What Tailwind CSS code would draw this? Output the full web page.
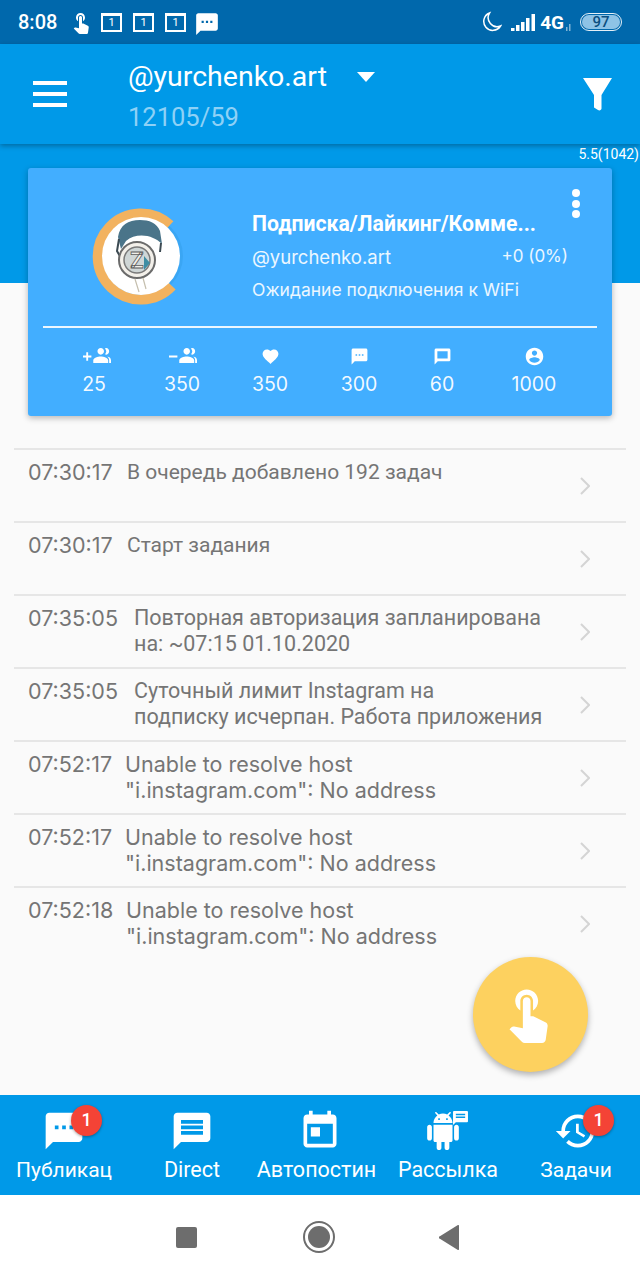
<!doctype html>
<html lang="ru">
  <head>
    <meta charset="UTF-8" />
    <title>Задания</title>
    <script src="https://cdn.jsdelivr.net/npm/@tailwindcss/browser@4"></script>
  </head>
  <body class="bg-white font-['Roboto',sans-serif]">
    <div class="w-[640px] h-[1280px] flex flex-col overflow-hidden">
      <!-- status bar -->
      <div class="h-[44px] shrink-0 bg-[#0068ac] flex items-center pl-[18px] text-white">
        <span class="text-[20px] font-medium w-[51px]">8:08</span>
        <svg class="w-[24px] h-[24px]" viewBox="0 0 24 24" fill="#fff"><path d="M9 11.24V7.5C9 6.12 10.12 5 11.5 5S14 6.12 14 7.5v3.74c1.21-.81 2-2.18 2-3.74C16 5.01 13.99 3 11.5 3S7 5.01 7 7.5c0 1.56.79 2.93 2 3.74zm9.84 4.63l-4.54-2.26c-.17-.07-.35-.11-.54-.11H13v-6c0-.83-.67-1.5-1.5-1.5S10 6.67 10 7.5v10.74l-3.43-.72c-.08-.01-.15-.03-.24-.03-.31 0-.59.13-.79.33l-.79.8 4.94 4.94c.27.27.65.44 1.06.44h6.79c.75 0 1.33-.55 1.44-1.28l.75-5.27c.01-.07.02-.14.02-.2 0-.62-.38-1.16-.91-1.38z"/></svg>
        <div class="flex gap-[11px] ml-[8px]">
          <span class="w-[21px] h-[19px] border-2 border-white border-t-[3px] flex items-center justify-center text-[11px] leading-none">1</span>
          <span class="w-[21px] h-[19px] border-2 border-white border-t-[3px] flex items-center justify-center text-[11px] leading-none">1</span>
          <span class="w-[21px] h-[19px] border-2 border-white border-t-[3px] flex items-center justify-center text-[11px] leading-none">1</span>
        </div>
        <svg class="w-[26px] h-[24px] ml-[8px] mt-[2px]" viewBox="0 0 24 22" preserveAspectRatio="none" fill="#fff"><path d="M20 2H4c-1.1 0-1.99.9-1.99 2L2 22l4-4h14c1.1 0 2-.9 2-2V4c0-1.1-.9-2-2-2zM9 11H7V9h2v2zm4 0h-2V9h2v2zm4 0h-2V9h2v2z"/></svg>
        <div class="ml-auto pr-[18px] flex items-center">
          <svg class="w-[21px] h-[22px]" viewBox="0 0 20 22" fill="none" stroke="#fff" stroke-width="1.5"><path d="M8 2a9 9 0 1 0 11 13 9 9 0 0 1-11-13z"/></svg>
          <svg class="w-[24px] h-[17px] ml-[9px]" viewBox="0 0 24 17" fill="#fff"><rect x="0" y="14" width="3.500" height="3"/><rect x="5" y="11" width="3.500" height="6"/><rect x="10" y="8" width="3.500" height="9"/><rect x="15" y="4" width="3.500" height="13"/><rect x="20.500" y="0" width="3.500" height="17"/></svg>
          <span class="ml-[5px] text-[19px] font-bold leading-none">4G</span>
          <svg class="w-[5px] h-[7px] ml-[2px] mt-[10px] opacity-50" viewBox="0 0 5 7" fill="#fff"><rect x="0" y="3" width="1.5" height="4"/><rect x="3" y="0" width="1.5" height="7"/></svg>
          <div class="ml-[9px] w-[42px] h-[18px] rounded-full border border-white/90 p-[1px] flex">
            <div class="flex-1 rounded-full bg-[#8ec3e6] text-[15px] leading-[14px] font-medium text-center text-[#0b4f80]">97</div>
          </div>
        </div>
      </div>

      <!-- app bar -->
      <div class="h-[100px] shrink-0 bg-[#0099e8] flex items-center pl-[33px] pr-[28px] text-white shadow-[0_2px_5px_rgba(0,0,0,0.3)] relative z-20">
        <div class="w-[34px] flex flex-col gap-[7px]">
          <div class="h-[4px] bg-white"></div>
          <div class="h-[4px] bg-white"></div>
          <div class="h-[4px] bg-white"></div>
        </div>
        <div class="ml-[61px] mt-[2px]">
          <div class="flex items-center h-[40px]">
            <span class="text-[28.5px] leading-none">@yurchenko.art</span>
            <span class="ml-[30px] w-0 h-0 border-x-[9px] border-x-transparent border-t-[10px] border-t-white"></span>
          </div>
          <div class="text-[25.5px] leading-[32px] text-[#8ed1f6] mt-[4px]">12105/59</div>
        </div>
        <svg class="ml-auto w-[29px] h-[33px]" viewBox="0 0 29 33" fill="#fff"><path d="M0 0h29L18.500 17v13.500c0 1.500-2 2.500-3.500 1.500L11 29.500V17z"/></svg>
      </div>

      <!-- blue band under the bar, card hangs over its edge -->
      <div class="h-[139px] shrink-0 bg-[#0099e8] relative z-10">
        <div class="text-right text-white text-[14px] leading-[17px] pt-[2px] pr-[1px]">5.5(1042)</div>
        <div class="mx-[28px] mt-[5px] h-[248px] bg-[#42aeff] rounded-[3px] shadow-[0_2px_6px_rgba(0,0,0,0.28)] text-white relative">
          <div class="h-[158px] flex">
            <svg class="w-[110px] h-[110px] ml-[57px] mt-[33px] shrink-0" viewBox="0 0 110 110">
              <circle cx="58" cy="55" r="40" fill="#3aa6f4"/>
              <path d="M85 24 A43 43 0 1 0 87 85" fill="none" stroke="#f2b25f" stroke-width="10"/>
              <circle cx="56" cy="55" r="39" fill="#fff"/>
              <path d="M33 36c2-12 10-17 22-17 9 0 17 3 20 11l2 13c-3-3-6-5-9-6-9-4-20-3-27 3l-5 8z" fill="#4a7489"/>
              <path d="M34 38l-2 12 4 7M76 42l-1 9" fill="none" stroke="#3c4a52" stroke-width="2"/>
              <circle cx="52" cy="59" r="18" fill="#f3f0ea" stroke="#6b6b6b" stroke-width="2"/>
              <circle cx="52" cy="59" r="13" fill="#cfd6d6" stroke="#7a7a7a" stroke-width="1.500"/>
              <path d="M59 55l6 7-6 7z" fill="#3e8da3"/>
              <text x="52" y="67" text-anchor="middle" font-size="22" font-family="Roboto" font-weight="700" fill="#f1efe9" stroke="#5d5d5d" stroke-width="0.800">Z</text>
              <path d="M50 78l4 13M58 77l3 11" stroke="#c5bfae" stroke-width="1.200"/>
            </svg>
            <div class="ml-[57px] flex-1 relative">
              <div class="mt-[43px] text-[21.200px] leading-[26px] font-bold whitespace-nowrap">Подписка/Лайкинг/Комме...</div>
              <div class="mt-[9px] flex pr-[44px] text-[18.500px] leading-[22px] text-white/90 font-['Inter',sans-serif]">
                <span>@yurchenko.art</span>
                <span class="ml-auto -mt-[1px] text-[17px]">+0 (0%)</span>
              </div>
              <div class="mt-[11px] text-[17.500px] leading-[22px] text-white/90 font-['Inter',sans-serif] whitespace-nowrap">Ожидание подключения к WiFi</div>
              <div class="absolute right-[32px] top-[21px] flex flex-col gap-[2.500px]">
                <div class="w-[8px] h-[8px] rounded-full bg-white"></div>
                <div class="w-[8px] h-[8px] rounded-full bg-white"></div>
                <div class="w-[8px] h-[8px] rounded-full bg-white"></div>
              </div>
            </div>
          </div>
          <div class="mx-[15px] h-[2px] bg-white/90"></div>
          <div class="flex pl-[22px] pt-[19px] text-[19.500px] leading-[20px] text-center font-['Inter',sans-serif] text-white/95">
            <div class="w-[88px] flex flex-col items-center">
              <svg class="w-[28px] h-[19px] ml-[6px]" viewBox="0 0 30 20" fill="#fff"><path d="M0 9h3.500V5.500h2V9H9v2H5.500v3.500h-2V11H0zM19 8c2 0 3.500-1.600 3.500-3.500S21 1 19 1s-3.500 1.600-3.500 3.500S17 8 19 8zm6 0c1.700 0 3-1.500 3-3.500S26.700 1 25 1c-.5 0-1 .1-1.400.4.800 1 1.300 2 1.300 3.100s-.5 2.300-1.300 3.100c.4.300.9.400 1.400.4zM19 10c-3 0-8 1.500-8 4v3h16v-3c0-2.500-5-4-8-4zm7 .1c1 .9 2 2.100 2 3.900v3h2v-3c0-2.500-2-3.500-4-3.900z"/></svg>
              <span class="mt-[8px]">25</span>
            </div>
            <div class="w-[88px] flex flex-col items-center">
              <svg class="w-[28px] h-[19px] ml-[2px]" viewBox="0 0 30 20" fill="#fff"><path d="M0 9h9v2H0zM19 8c2 0 3.500-1.600 3.500-3.500S21 1 19 1s-3.500 1.600-3.500 3.500S17 8 19 8zm6 0c1.700 0 3-1.500 3-3.500S26.700 1 25 1c-.5 0-1 .1-1.400.4.800 1 1.300 2 1.300 3.100s-.5 2.300-1.300 3.100c.4.300.9.400 1.400.4zM19 10c-3 0-8 1.500-8 4v3h16v-3c0-2.500-5-4-8-4zm7 .1c1 .9 2 2.100 2 3.900v3h2v-3c0-2.500-2-3.500-4-3.900z"/></svg>
              <span class="mt-[8px]">350</span>
            </div>
            <div class="w-[88px] flex flex-col items-center">
              <svg class="w-[19px] h-[19px]" viewBox="0 0 24 24" fill="#fff"><path d="M12 21.350l-1.450-1.320C5.400 15.360 2 12.280 2 8.500 2 5.420 4.420 3 7.500 3c1.740 0 3.410.81 4.500 2.090C13.090 3.810 14.760 3 16.500 3 19.580 3 22 5.420 22 8.500c0 3.780-3.400 6.860-8.550 11.540L12 21.350z"/></svg>
              <span class="mt-[8px]">350</span>
            </div>
            <div class="w-[90px] flex flex-col items-center">
              <svg class="w-[19px] h-[19px]" viewBox="0 0 24 24" fill="#fff"><path d="M20 2H4c-1.100 0-1.990.9-1.990 2L2 22l4-4h14c1.100 0 2-.9 2-2V4c0-1.100-.9-2-2-2zM9 11H7V9h2v2zm4 0h-2V9h2v2zm4 0h-2V9h2v2z"/></svg>
              <span class="mt-[8px]">300</span>
            </div>
            <div class="w-[76px] flex flex-col items-center">
              <svg class="w-[19px] h-[19px]" viewBox="0 0 24 24" fill="#fff"><path d="M20 2H4c-1.100 0-2 .9-2 2v18l4-4h14c1.100 0 2-.9 2-2V4c0-1.100-.9-2-2-2zm-1.500 12.500h-13v-9h13z"/></svg>
              <span class="mt-[8px]">60</span>
            </div>
            <div class="w-[108px] flex flex-col items-center">
              <svg class="w-[21px] h-[21px] -my-[1px]" viewBox="0 0 24 24" fill="#fff"><path d="M12 2C6.480 2 2 6.480 2 12s4.480 10 10 10 10-4.480 10-10S17.520 2 12 2zm0 3c1.660 0 3 1.340 3 3s-1.340 3-3 3-3-1.340-3-3 1.340-3 3-3zm0 14.200c-2.500 0-4.710-1.280-6-3.220.03-1.990 4-3.080 6-3.080 1.990 0 5.970 1.090 6 3.080-1.290 1.940-3.500 3.220-6 3.220z"/></svg>
              <span class="mt-[8px]">1000</span>
            </div>
          </div>
        </div>
      </div>

      <!-- log -->
      <div class="flex-1 bg-[#fafafa] pt-[165px] px-[14px] relative text-[#757575] text-[21.500px] leading-[26px]">
        <div class="h-[73px] border-t-2 border-[#e6e6e6] flex pl-[14px] pt-[9px] relative">
          <span class="font-['Inter',sans-serif] text-[21.500px] w-[99px] shrink-0">07:30:17</span>
          <span class="whitespace-nowrap text-[21px]">В очередь добавлено 192 задач</span>
          <svg class="absolute right-[36px] top-[27px] w-[10px] h-[18px]" viewBox="0 0 10 18" fill="none" stroke="#d4d4d4" stroke-width="2"><path d="M1 1l8 8-8 8"/></svg>
        </div>
        <div class="h-[73px] border-t-2 border-[#e6e6e6] flex pl-[14px] pt-[9px] relative">
          <span class="font-['Inter',sans-serif] text-[21.500px] w-[99px] shrink-0">07:30:17</span>
          <span class="whitespace-nowrap text-[21px]">Старт задания</span>
          <svg class="absolute right-[36px] top-[27px] w-[10px] h-[18px]" viewBox="0 0 10 18" fill="none" stroke="#d4d4d4" stroke-width="2"><path d="M1 1l8 8-8 8"/></svg>
        </div>
        <div class="h-[73px] border-t-2 border-[#e6e6e6] flex pl-[14px] pt-[9px] relative">
          <span class="font-['Inter',sans-serif] text-[21.500px] w-[106px] shrink-0">07:35:05</span>
          <span class="whitespace-nowrap">Повторная авторизация запланирована<br />на: ~07:15 01.10.2020</span>
          <svg class="absolute right-[36px] top-[27px] w-[10px] h-[18px]" viewBox="0 0 10 18" fill="none" stroke="#d4d4d4" stroke-width="2"><path d="M1 1l8 8-8 8"/></svg>
        </div>
        <div class="h-[73px] border-t-2 border-[#e6e6e6] flex pl-[14px] pt-[9px] relative">
          <span class="font-['Inter',sans-serif] text-[21.500px] w-[106px] shrink-0">07:35:05</span>
          <span class="whitespace-nowrap">Суточный лимит Instagram на<br />подписку исчерпан. Работа приложения</span>
          <svg class="absolute right-[36px] top-[27px] w-[10px] h-[18px]" viewBox="0 0 10 18" fill="none" stroke="#d4d4d4" stroke-width="2"><path d="M1 1l8 8-8 8"/></svg>
        </div>
        <div class="h-[73px] border-t-2 border-[#e6e6e6] flex pl-[14px] pt-[9px] relative">
          <span class="font-['Inter',sans-serif] text-[21.500px] w-[97px] shrink-0">07:52:17</span>
          <span class="whitespace-nowrap font-['Inter',sans-serif]">Unable to resolve host<br />"i.instagram.com": No address</span>
          <svg class="absolute right-[36px] top-[27px] w-[10px] h-[18px]" viewBox="0 0 10 18" fill="none" stroke="#d4d4d4" stroke-width="2"><path d="M1 1l8 8-8 8"/></svg>
        </div>
        <div class="h-[73px] border-t-2 border-[#e6e6e6] flex pl-[14px] pt-[9px] relative">
          <span class="font-['Inter',sans-serif] text-[21.500px] w-[97px] shrink-0">07:52:17</span>
          <span class="whitespace-nowrap font-['Inter',sans-serif]">Unable to resolve host<br />"i.instagram.com": No address</span>
          <svg class="absolute right-[36px] top-[27px] w-[10px] h-[18px]" viewBox="0 0 10 18" fill="none" stroke="#d4d4d4" stroke-width="2"><path d="M1 1l8 8-8 8"/></svg>
        </div>
        <div class="h-[73px] border-t-2 border-[#e6e6e6] flex pl-[14px] pt-[9px] relative">
          <span class="font-['Inter',sans-serif] text-[21.500px] w-[98px] shrink-0">07:52:18</span>
          <span class="whitespace-nowrap font-['Inter',sans-serif]">Unable to resolve host<br />"i.instagram.com": No address</span>
          <svg class="absolute right-[36px] top-[27px] w-[10px] h-[18px]" viewBox="0 0 10 18" fill="none" stroke="#d4d4d4" stroke-width="2"><path d="M1 1l8 8-8 8"/></svg>
        </div>
        <!-- fab -->
        <div class="absolute left-[473px] top-[674px] w-[115px] h-[115px] rounded-full bg-[#fdd15f] shadow-[0_3px_6px_rgba(0,0,0,0.3)] flex items-center justify-center">
          <svg class="w-[51px] h-[56px]" viewBox="3 2 20 22" fill="#fff"><path d="M9 11.240V7.500C9 6.120 10.120 5 11.500 5S14 6.120 14 7.500v3.740c1.210-.81 2-2.180 2-3.740C16 5.010 13.990 3 11.500 3S7 5.010 7 7.500c0 1.560.79 2.930 2 3.740zm9.840 4.630l-4.540-2.260c-.17-.07-.35-.11-.54-.11H13v-6c0-.83-.67-1.500-1.500-1.500S10 6.670 10 7.500v10.740l-3.430-.72c-.08-.01-.15-.03-.24-.03-.31 0-.59.13-.79.33l-.79.8 4.940 4.940c.27.27.65.44 1.060.44h6.790c.75 0 1.330-.55 1.440-1.280l.75-5.270c.01-.07.02-.14.02-.2 0-.62-.38-1.160-.91-1.380z"/></svg>
        </div>
      </div>

      <!-- bottom tabs -->
      <div class="h-[100px] shrink-0 bg-[#0099e8] grid grid-cols-5 text-white text-[21.500px] leading-[24px] text-center">
        <div class="flex flex-col items-center pt-[14px] relative">
          <svg class="w-[44px] h-[44px]" viewBox="0 0 24 24" fill="#fff"><path d="M20 2H4c-1.100 0-1.990.9-1.990 2L2 22l4-4h14c1.100 0 2-.9 2-2V4c0-1.100-.9-2-2-2zM9 11H7V9h2v2zm4 0h-2V9h2v2zm4 0h-2V9h2v2z"/></svg>
          <span class="mt-[5px] whitespace-nowrap text-[21px]">Публикац</span>
          <span class="absolute left-[71px] top-[10px] w-[31px] h-[31px] rounded-full bg-[#f44336] shadow-[0_1px_3px_rgba(0,0,0,0.35)] text-[18px] leading-[30px] font-medium">1</span>
        </div>
        <div class="flex flex-col items-center pt-[14px]">
          <svg class="w-[44px] h-[44px]" viewBox="0 0 24 24" fill="#fff"><path d="M20 2H4c-1.100 0-1.990.9-1.990 2L2 22l4-4h14c1.100 0 2-.9 2-2V4c0-1.100-.9-2-2-2zm-2 12H6v-2h12v2zm0-3H6V9h12v2zm0-3H6V6h12v2z"/></svg>
          <span class="mt-[5px] whitespace-nowrap">Direct</span>
        </div>
        <div class="flex flex-col items-center pt-[14px]">
          <svg class="w-[44px] h-[44px]" viewBox="0 0 24 24" fill="#fff"><path d="M19 3h-1V1h-2v2H8V1H6v2H5c-1.110 0-1.990.9-1.990 2L3 19c0 1.100.89 2 2 2h14c1.100 0 2-.9 2-2V5c0-1.100-.9-2-2-2zm0 16H5V8h14v11zM7 10h5v5H7z"/></svg>
          <span class="mt-[5px] whitespace-nowrap -ml-[7px]">Автопостин</span>
        </div>
        <div class="flex flex-col items-center pt-[14px] relative">
          <svg class="w-[38px] h-[38px] my-[3px] -ml-[10px]" viewBox="0 0 24 24" fill="#fff"><path d="M6 18c0 .55.45 1 1 1h1v3.500c0 .83.67 1.500 1.500 1.500s1.500-.67 1.500-1.500V19h2v3.500c0 .83.67 1.500 1.500 1.500s1.500-.67 1.500-1.500V19h1c.55 0 1-.45 1-1V8H6v10zM3.500 8C2.670 8 2 8.670 2 9.500v7c0 .83.67 1.500 1.500 1.500S5 17.330 5 16.500v-7C5 8.670 4.330 8 3.500 8zm17 0c-.83 0-1.500.67-1.500 1.500v7c0 .83.67 1.500 1.500 1.500s1.500-.67 1.500-1.500v-7c0-.83-.67-1.500-1.500-1.500zm-4.970-5.840l1.300-1.300c.2-.2.2-.51 0-.71-.2-.2-.51-.2-.71 0l-1.480 1.480C13.850 1.230 12.950 1 12 1c-.96 0-1.860.23-2.660.63L7.850.15c-.2-.2-.51-.2-.71 0-.2.2-.2.51 0 .71l1.310 1.310C6.970 3.260 6 5.010 6 7h12c0-1.990-.97-3.750-2.470-4.840zM10 5H9V4h1v1zm5 0h-1V4h1v1z"/></svg>
          <svg class="absolute left-[69px] top-[16px] w-[15px] h-[14px]" viewBox="0 0 16 15" fill="#fff"><path d="M1 0h14a1 1 0 0 1 1 1v10a1 1 0 0 1-1 1H3l-3 3V1a1 1 0 0 1 1-1zM3 3v1.500h10V3zM3 6v1.500h10V6z"/></svg>
          <span class="mt-[5px] whitespace-nowrap">Рассылка</span>
        </div>
        <div class="flex flex-col items-center pt-[14px] relative">
          <svg class="w-[44px] h-[44px]" viewBox="0 0 24 24" fill="#fff"><path d="M13 3c-4.970 0-9 4.030-9 9H1l3.890 3.890.07.14L9 12H6c0-3.870 3.130-7 7-7s7 3.130 7 7-3.130 7-7 7c-1.930 0-3.680-.79-4.940-2.060l-1.420 1.420C8.270 19.990 10.510 21 13 21c4.970 0 9-4.030 9-9s-4.030-9-9-9zm-1 5v5l4.280 2.540.72-1.210-3.500-2.080V8H12z"/></svg>
          <span class="mt-[5px] whitespace-nowrap text-[21px]">Задачи</span>
          <span class="absolute left-[71px] top-[10px] w-[31px] h-[31px] rounded-full bg-[#f44336] shadow-[0_1px_3px_rgba(0,0,0,0.35)] text-[18px] leading-[30px] font-medium">1</span>
        </div>
      </div>

      <!-- android nav -->
      <div class="h-[85px] shrink-0 bg-white flex items-center pl-[176px] pb-[1px]">
        <div class="w-[21px] h-[21px] rounded-[2px] bg-[#6d6d6d]"></div>
        <div class="ml-[106px] w-[32px] h-[32px] rounded-full border-2 border-[#6d6d6d] p-[3px] -mt-[1px]">
          <div class="w-full h-full rounded-full bg-[#6d6d6d]"></div>
        </div>
        <svg class="ml-[104px] w-[20px] h-[25px]" viewBox="0 0 20 25" fill="#6d6d6d"><path d="M20 1v23a1 1 0 0 1-1.500.8L.5 13.500a1 1 0 0 1 0-2L18.500.2A1 1 0 0 1 20 1z"/></svg>
      </div>
    </div>
  </body>
</html>
